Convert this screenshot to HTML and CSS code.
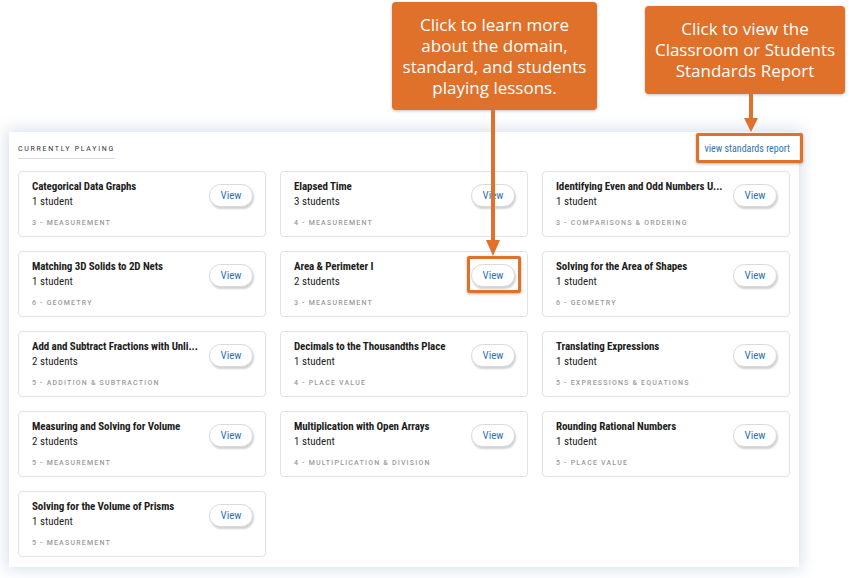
FILE: index.html
```html
<!DOCTYPE html>
<html lang="en">
<head>
    <meta charset="UTF-8">
    <meta name="viewport" content="width=device-width, initial-scale=1.0">
    <title>Currently Playing</title>
    <link rel="stylesheet" href="styles.css">
</head>
<body>

<div class="panel">
    <div class="panel-header">
        <span class="panel-title">Currently Playing</span>
        <a href="#" class="report-link">view standards report</a>
    </div>

    <div class="lesson-grid">
        <div class="lesson">
            <div class="lesson-info">
                <div class="lesson-name">Categorical Data Graphs</div>
                <div class="lesson-count">1 student</div>
                <div class="lesson-domain">3 - Measurement</div>
            </div>
            <button class="view-btn">View</button>
        </div>
        <div class="lesson">
            <div class="lesson-info">
                <div class="lesson-name">Elapsed Time</div>
                <div class="lesson-count">3 students</div>
                <div class="lesson-domain">4 - Measurement</div>
            </div>
            <button class="view-btn">View</button>
        </div>
        <div class="lesson">
            <div class="lesson-info">
                <div class="lesson-name">Identifying Even and Odd Numbers U...</div>
                <div class="lesson-count">1 student</div>
                <div class="lesson-domain">3 - Comparisons &amp; Ordering</div>
            </div>
            <button class="view-btn">View</button>
        </div>

        <div class="lesson">
            <div class="lesson-info">
                <div class="lesson-name">Matching 3D Solids to 2D Nets</div>
                <div class="lesson-count">1 student</div>
                <div class="lesson-domain">6 - Geometry</div>
            </div>
            <button class="view-btn">View</button>
        </div>
        <div class="lesson">
            <div class="lesson-info">
                <div class="lesson-name">Area &amp; Perimeter I</div>
                <div class="lesson-count">2 students</div>
                <div class="lesson-domain">3 - Measurement</div>
            </div>
            <button class="view-btn">View</button>
        </div>
        <div class="lesson">
            <div class="lesson-info">
                <div class="lesson-name">Solving for the Area of Shapes</div>
                <div class="lesson-count">1 student</div>
                <div class="lesson-domain">6 - Geometry</div>
            </div>
            <button class="view-btn">View</button>
        </div>

        <div class="lesson">
            <div class="lesson-info">
                <div class="lesson-name">Add and Subtract Fractions with Unli...</div>
                <div class="lesson-count">2 students</div>
                <div class="lesson-domain">5 - Addition &amp; Subtraction</div>
            </div>
            <button class="view-btn">View</button>
        </div>
        <div class="lesson">
            <div class="lesson-info">
                <div class="lesson-name">Decimals to the Thousandths Place</div>
                <div class="lesson-count">1 student</div>
                <div class="lesson-domain">4 - Place Value</div>
            </div>
            <button class="view-btn">View</button>
        </div>
        <div class="lesson">
            <div class="lesson-info">
                <div class="lesson-name">Translating Expressions</div>
                <div class="lesson-count">1 student</div>
                <div class="lesson-domain">5 - Expressions &amp; Equations</div>
            </div>
            <button class="view-btn">View</button>
        </div>

        <div class="lesson">
            <div class="lesson-info">
                <div class="lesson-name">Measuring and Solving for Volume</div>
                <div class="lesson-count">2 students</div>
                <div class="lesson-domain">5 - Measurement</div>
            </div>
            <button class="view-btn">View</button>
        </div>
        <div class="lesson">
            <div class="lesson-info">
                <div class="lesson-name">Multiplication with Open Arrays</div>
                <div class="lesson-count">1 student</div>
                <div class="lesson-domain">4 - Multiplication &amp; Division</div>
            </div>
            <button class="view-btn">View</button>
        </div>
        <div class="lesson">
            <div class="lesson-info">
                <div class="lesson-name">Rounding Rational Numbers</div>
                <div class="lesson-count">1 student</div>
                <div class="lesson-domain">5 - Place Value</div>
            </div>
            <button class="view-btn">View</button>
        </div>

        <div class="lesson">
            <div class="lesson-info">
                <div class="lesson-name">Solving for the Volume of Prisms</div>
                <div class="lesson-count">1 student</div>
                <div class="lesson-domain">5 - Measurement</div>
            </div>
            <button class="view-btn">View</button>
        </div>
    </div>
</div>

<!-- tutorial annotations drawn over the screenshot -->
<div class="callout callout-lessons">Click to learn more<br>about the domain,<br>standard, and students<br>playing lessons.</div>
<div class="callout callout-report">Click to view the<br>Classroom or Students<br>Standards Report</div>

<svg class="arrows" width="858" height="578" viewBox="0 0 858 578">
    <rect x="491" y="108" width="4" height="134" fill="#e0712a"/>
    <polygon points="486,240 500,240 493,256" fill="#e0712a"/>
    <rect x="749" y="92" width="4" height="28" fill="#e0712a"/>
    <polygon points="744,118 758,118 751,132" fill="#e0712a"/>
</svg>

<div class="highlight highlight-view"></div>
<div class="highlight highlight-report"></div>

</body>
</html>
```

FILE: styles.css
```css
body {
    margin: 0;
    padding: 132px 0 0 9px;
    background-color: #fff;
    font-family: "Roboto Condensed", "Liberation Sans Narrow", "DejaVu Sans Condensed", Roboto, sans-serif;
    color: #1d1d1d;
    width: 858px;
    height: 578px;
    box-sizing: border-box;
    overflow: hidden;
    position: relative;
}

.panel {
    width: 790px;
    box-sizing: border-box;
    padding: 10px 9px 10px 9px;
    background-color: #fff;
    box-shadow: 0 0 14px 3px rgba(175, 190, 212, 0.45);
}

.panel-header {
    display: flex;
    justify-content: space-between;
    align-items: flex-start;
    height: 29px;
}

.panel-title {
    font-family: Roboto, sans-serif;
    font-size: 7px;
    letter-spacing: 1.7px;
    text-transform: uppercase;
    color: #333;
    padding: 2px 0 3px;
    line-height: 11px;
    border-bottom: 1px solid #dcdcdc;
}

.report-link {
    font-size: 10px;
    line-height: 12px;
    color: #2f74b5;
    text-decoration: none;
    padding-top: 1px;
}

.lesson-grid {
    display: grid;
    grid-template-columns: repeat(3, 248px);
    grid-auto-rows: 66px;
    gap: 14px;
}

.lesson {
    display: flex;
    justify-content: space-between;
    align-items: flex-start;
    border: 1px solid #e2e2e2;
    border-radius: 4px;
    padding: 7px 12px 0 13px;
    box-sizing: border-box;
}

.lesson-name {
    font-size: 11px;
    font-weight: bold;
    line-height: 15px;
    letter-spacing: -0.1px;
    white-space: nowrap;
}

.lesson-count {
    font-size: 11px;
    line-height: 15px;
}

.lesson-domain {
    font-family: Roboto, sans-serif;
    font-weight: 500;
    margin-top: 9px;
    font-size: 7px;
    line-height: 10px;
    letter-spacing: 1.2px;
    text-transform: uppercase;
    color: #9a9a9a;
}

.view-btn {
    margin-top: 5px;
    width: 44px;
    height: 23px;
    padding: 0;
    border: 1px solid #dadada;
    border-radius: 12px;
    background-color: #fff;
    box-shadow: 1px 2px 2px rgba(0, 0, 0, 0.18);
    font-family: inherit;
    font-size: 11px;
    color: #2f74b5;
    cursor: pointer;
    flex-shrink: 0;
}

.callout {
    position: absolute;
    box-sizing: border-box;
    background-color: #e0712a;
    border-radius: 4px;
    box-shadow: 0 1px 3px rgba(0, 0, 0, 0.25);
    color: #fff;
    font-family: "Open Sans", sans-serif;
    font-size: 17px;
    line-height: 21px;
    text-align: center;
    padding-top: 12px;
}

.callout-lessons {
    left: 392px;
    top: 2px;
    width: 205px;
    height: 108px;
}

.callout-report {
    left: 645px;
    top: 6px;
    width: 200px;
    height: 88px;
}

.arrows {
    position: absolute;
    left: 0;
    top: 0;
    pointer-events: none;
}

.highlight {
    position: absolute;
    box-sizing: border-box;
    border: 3px solid #e0712a;
    border-radius: 2px;
    box-shadow: 0 1px 3px rgba(0, 0, 0, 0.3);
}

.highlight-view {
    left: 467px;
    top: 256px;
    width: 54px;
    height: 37px;
}

.highlight-report {
    left: 696px;
    top: 133px;
    width: 107px;
    height: 30px;
}
```
